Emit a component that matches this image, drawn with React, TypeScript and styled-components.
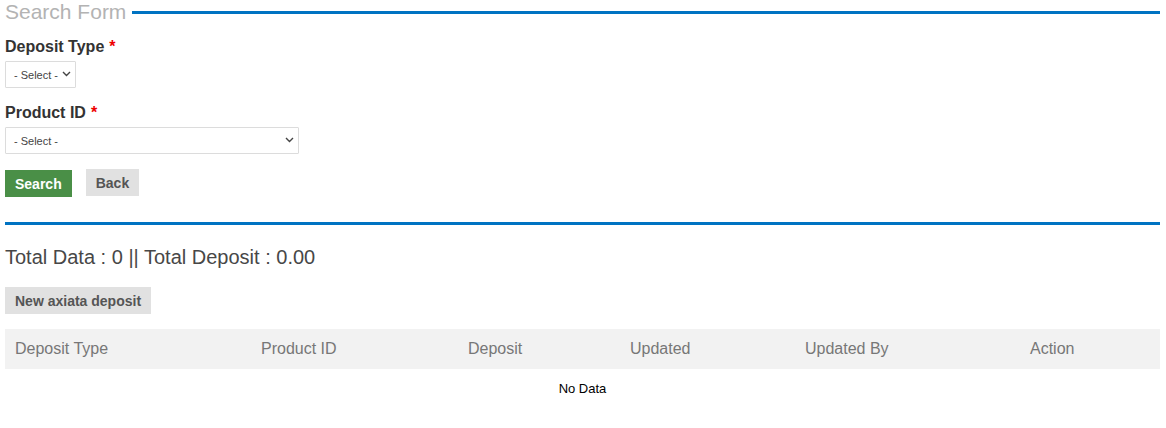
import React from "react";
import styled, { createGlobalStyle } from "styled-components";

const Global = createGlobalStyle`
  html, body { margin: 0; padding: 0; background: #fff; }
  body { font-family: "Liberation Sans", Arial, sans-serif; color: #333; }
  * { box-sizing: border-box; }
`;

const Page = styled.div`
  padding: 0 6px 0 5px;
`;

const Legend = styled.div`
  display: flex;
  align-items: center;
  gap: 6px;
  height: 24px;
`;

const LegendText = styled.span`
  font-size: 21px;
  font-weight: 400;
  color: #b3b3b3;
  line-height: 24px;
`;

const Rule = styled.div<{ $mt?: number }>`
  flex: 1;
  height: 3px;
  background: #0073c2;
  margin-top: ${(p) => p.$mt ?? 0}px;
`;

const Field = styled.div`
  display: flex;
  flex-direction: column;
  align-items: flex-start;
`;

const Label = styled.label<{ $mt: number }>`
  font-size: 16px;
  font-weight: 700;
  color: #333;
  line-height: 20px;
  margin-top: ${(p) => p.$mt}px;
  margin-bottom: 4px;
`;

const Star = styled.span`
  color: #e00;
  margin-left: 5px;
`;

const SelectBox = styled.div<{ $w: number }>`
  position: relative;
  width: ${(p) => p.$w}px;
  height: 27px;
`;

const NativeSelect = styled.select`
  appearance: none;
  width: 100%;
  height: 100%;
  border: 1px solid #dcdcdc;
  border-radius: 1px;
  background: #fff;
  font-family: "Liberation Sans", Arial, sans-serif;
  font-size: 11px;
  color: #444;
  padding: 0 0 0 8px;
  outline: none;
`;

const Chevron = styled.svg`
  position: absolute;
  right: 5px;
  top: 10px;
  pointer-events: none;
`;

const Buttons = styled.div`
  display: flex;
  align-items: flex-start;
  gap: 14px;
  margin-top: 16px;
`;

const Btn = styled.button<{ $variant?: "primary" | "default"; $shift?: number }>`
  height: 27px;
  border: none;
  border-radius: 0;
  padding: 0 10px;
  font-family: "Liberation Sans", Arial, sans-serif;
  font-size: 14px;
  font-weight: 700;
  cursor: pointer;
  background: ${(p) => (p.$variant === "primary" ? "#4a8f47" : "#e1e1e1")};
  color: ${(p) => (p.$variant === "primary" ? "#fff" : "#555")};
  margin-top: ${(p) => p.$shift ?? 0}px;
`;

const Summary = styled.div`
  font-size: 20px;
  font-weight: 400;
  color: #474747;
  line-height: 24px;
  margin-top: 20px;
`;

const ActionRow = styled.div`
  margin-top: 18px;
  display: flex;
`;

const Table = styled.table`
  width: 100%;
  border-collapse: collapse;
  margin-top: 15px;
  table-layout: fixed;
`;

const Th = styled.th`
  background: #f2f2f2;
  height: 40px;
  padding: 0 10px;
  text-align: left;
  font-weight: 400;
  font-size: 16px;
  color: #777;
`;

const EmptyCell = styled.td`
  text-align: center;
  font-size: 13px;
  color: #000;
  height: 38px;
`;

const Row = styled.div`
  display: flex;
`;

const Select: React.FC<{ width: number }> = ({ width }) => (
  <SelectBox $w={width}>
    <NativeSelect defaultValue="">
      <option value="">- Select -</option>
    </NativeSelect>
    <Chevron width="9" height="6" viewBox="0 0 9 6">
      <path d="M1 1 L4.5 4.5 L8 1" fill="none" stroke="#444" strokeWidth="1.4" />
    </Chevron>
  </SelectBox>
);

const columns: { title: string; width: number }[] = [
  { title: "Deposit Type", width: 246 },
  { title: "Product ID", width: 207 },
  { title: "Deposit", width: 162 },
  { title: "Updated", width: 175 },
  { title: "Updated By", width: 225 },
  { title: "Action", width: 140 },
];

export default function App() {
  return (
    <Page>
      <Global />
      <Legend>
        <LegendText>Search Form</LegendText>
        <Rule />
      </Legend>
      <Field>
        <Label $mt={13}>
          Deposit Type<Star>*</Star>
        </Label>
        <Select width={71} />
      </Field>
      <Field>
        <Label $mt={15}>
          Product ID<Star>*</Star>
        </Label>
        <Select width={294} />
      </Field>
      <Buttons>
        <Btn $variant="primary">Search</Btn>
        <Btn $shift={-1}>Back</Btn>
      </Buttons>
      <Row>
        <Rule $mt={25} />
      </Row>
      <Summary>Total Data : 0 || Total Deposit : 0.00</Summary>
      <ActionRow>
        <Btn>New axiata deposit</Btn>
      </ActionRow>
      <Table>
        <colgroup>
          {columns.map((c) => (
            <col key={c.title} style={{ width: c.width }} />
          ))}
        </colgroup>
        <thead>
          <tr>
            {columns.map((c) => (
              <Th key={c.title}>{c.title}</Th>
            ))}
          </tr>
        </thead>
        <tbody>
          <tr>
            <EmptyCell colSpan={6}>No Data</EmptyCell>
          </tr>
        </tbody>
      </Table>
    </Page>
  );
}
